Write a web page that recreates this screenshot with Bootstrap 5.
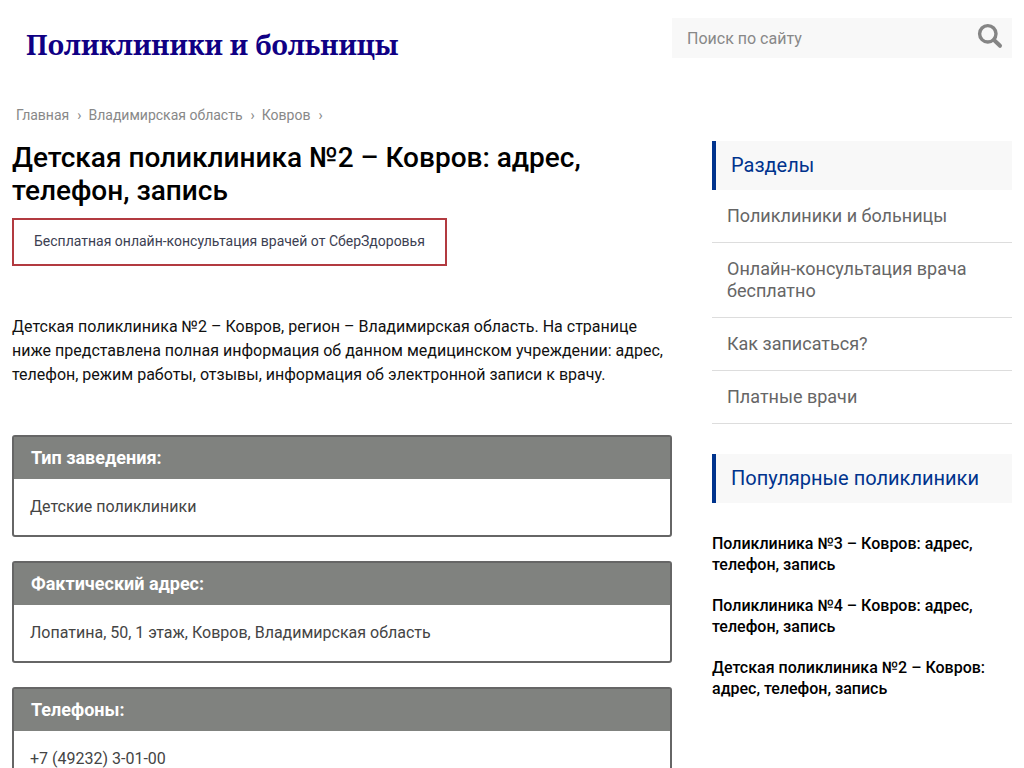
<!DOCTYPE html>
<html lang="ru">
<head>
<meta charset="utf-8">
<meta name="viewport" content="width=device-width, initial-scale=1">
<title>Детская поликлиника №2 – Ковров</title>
<link href="https://cdn.jsdelivr.net/npm/bootstrap@5.3.0/dist/css/bootstrap.min.css" rel="stylesheet">
<style>
body{font-family:Roboto,"Liberation Sans",sans-serif;color:#111;background:#fff;line-height:24px}
a{text-decoration:none}
.site-wrap{max-width:1200px;padding:0 12px}
.site-head{padding:18px 0 44px}
.logo-link{font-family:"Noto Serif","PT Serif","Liberation Serif",serif;font-weight:700;font-size:27px;line-height:30px;color:#100084;padding:12px 0 0 14px}
.search-box{width:340px;height:40px;background:#f8f8f8}
.search-box input{font-size:16px;padding:0 15px;height:40px;border-radius:0}
.search-box input::placeholder{color:#888;opacity:1}
.search-box button{width:44px;height:36px}
.crumbs{font-size:14px;line-height:22px;padding-left:4px}
.crumbs,.crumbs a{color:#888}
.crumbs span{padding:0 7px 0 8px}
.page-title{font-size:28px;line-height:33px;font-weight:500;color:#000;margin:15px 0 11px}
.promo{border:2px solid #b23a40;padding:10px 20px 12px;font-size:14px;line-height:22px;color:#3c4052}
.intro{margin:49px 0 48px}
.info-box{border:2px solid #666;border-radius:3px;margin-bottom:24px}
.info-box h2{background:#80827f;color:#fff;font-size:18px;line-height:24px;font-weight:700;padding:9px 17px;margin:0}
.info-box p{color:#444;padding:16px;margin:0}
.side{width:300px;margin-left:40px;padding-top:15px}
.side-title{font-size:20px;line-height:25px;font-weight:400;color:#00338d;background:#f8f8f8;border-left:4px solid #00338d;padding:12px 15px;margin:0}
.side-menu{margin-bottom:30px}
.side-menu a{display:block;font-size:18px;line-height:22px;color:#666;padding:15px;border-bottom:1px solid #ddd}
.popular{margin-top:30px}
.popular a{display:block;font-size:16px;line-height:21px;font-weight:500;color:#000;margin-bottom:20px}
</style>
</head>
<body>
<div class="site-wrap container-fluid">
<header class="site-head d-flex justify-content-between align-items-start">
<a class="logo-link" href="#">Поликлиники и больницы</a>
<form class="search-box d-flex">
<input class="form-control border-0 bg-transparent shadow-none" type="text" placeholder="Поиск по сайту" aria-label="Поиск по сайту">
<button class="btn border-0 p-0 flex-shrink-0 d-flex align-items-center justify-content-center" type="button" aria-label="Найти"><svg width="26" height="26" viewBox="0 0 26 26" fill="none" stroke="#858585"><circle cx="10.8" cy="10.8" r="8.2" stroke-width="3.4"/><path d="M17 17l6 5.8" stroke-width="4" stroke-linecap="round"/></svg></button>
</form>
</header>
<nav class="crumbs d-flex" aria-label="Навигация"><a href="#">Главная</a><span>›</span><a href="#">Владимирская область</a><span>›</span><a href="#">Ковров</a><span>›</span></nav>
<div class="d-flex align-items-start">
<main class="flex-fill">
<h1 class="page-title">Детская поликлиника №2 – Ковров: адрес, телефон, запись</h1>
<a class="promo d-inline-block align-top" href="#">Бесплатная онлайн-консультация врачей от СберЗдоровья</a>
<p class="intro">Детская поликлиника №2 – Ковров, регион – Владимирская область. На странице ниже представлена полная информация об данном медицинском учреждении: адрес, телефон, режим работы, отзывы, информация об электронной записи к врачу.</p>
<section class="info-box"><h2>Тип заведения:</h2><p>Детские поликлиники</p></section>
<section class="info-box"><h2>Фактический адрес:</h2><p>Лопатина, 50, 1 этаж, Ковров, Владимирская область</p></section>
<section class="info-box mb-0"><h2>Телефоны:</h2><p>+7 (49232) 3-01-00</p></section>
</main>
<aside class="side flex-shrink-0">
<h2 class="side-title">Разделы</h2>
<nav class="side-menu" aria-label="Разделы"><a href="#">Поликлиники и больницы</a><a href="#">Онлайн-консультация врача бесплатно</a><a href="#">Как записаться?</a><a href="#">Платные врачи</a></nav>
<h2 class="side-title">Популярные поликлиники</h2>
<div class="popular"><a href="#">Поликлиника №3 – Ковров: адрес, телефон, запись</a><a href="#">Поликлиника №4 – Ковров: адрес, телефон, запись</a><a href="#">Детская поликлиника №2 – Ковров: адрес, телефон, запись</a></div>
</aside>
</div>
</div>
<script src="https://cdn.jsdelivr.net/npm/bootstrap@5.3.0/dist/js/bootstrap.bundle.min.js"></script>
</body>
</html>
